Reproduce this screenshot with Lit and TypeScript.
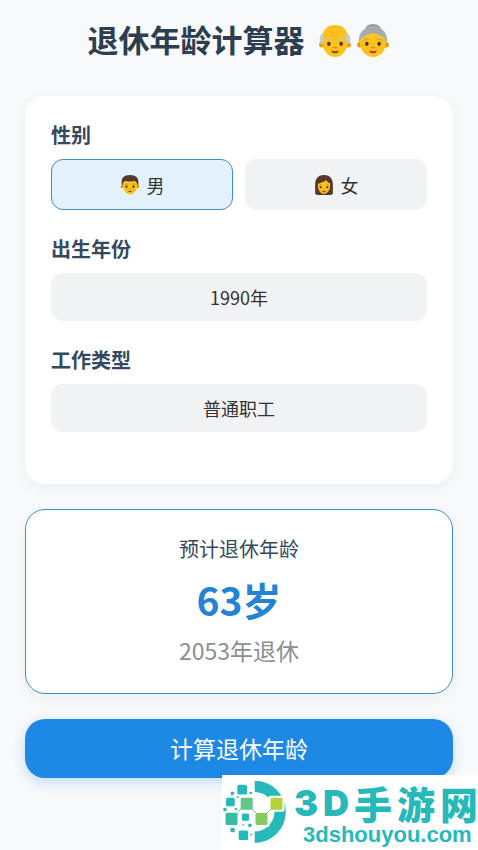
import { LitElement, html, css, svg } from "lit";
import { customElement, state } from "lit/decorators.js";

const grandpa = svg`
  <circle cx="4" cy="22" r="2.800" fill="#e59a00"/>
  <circle cx="32" cy="22" r="2.800" fill="#e59a00"/>
  <path d="M18 1C8.500 1 4 7.500 4 17c0 10.500 6.500 18 14 18s14-7.500 14-18C32 7.500 27.500 1 18 1z" fill="#fcc21b"/>
  <path d="M6 9c-4 2-5.500 8-3 12.500 2.500-1 3.500-4 3.500-7zM30 9c4 2 5.500 8 3 12.500-2.500-1-3.500-4-3.500-7z" fill="#c9cbc4"/>
  <path d="M8.500 17.500c1-2 4-2.500 6-1.200M27.500 17.500c-1-2-4-2.500-6-1.200" fill="none" stroke="#cfc39a" stroke-width="1.600" stroke-linecap="round"/>
  <path d="M13 9.500h10M14 12.500h8" stroke="#eeb010" stroke-width=".8"/>
  <ellipse cx="11.500" cy="21" rx="1.900" ry="2.200" fill="#4a3428"/>
  <ellipse cx="24.500" cy="21" rx="1.900" ry="2.200" fill="#4a3428"/>
  <path d="M16.300 25h3.400" stroke="#d98c00" stroke-width="1.400" stroke-linecap="round"/>
  <path d="M13.500 28q4.500 1.500 9 0-1.500 3-4.500 3t-4.500-3z" fill="#8a3f1c"/>`;

const grandma = svg`
  <ellipse cx="18" cy="4.500" rx="8" ry="4.500" fill="#9fa3a6"/>
  <path d="M18 3C8 3 3 9 3 18l2 4h26l2-4C33 9 28 3 18 3z" fill="#acb0b3"/>
  <circle cx="4" cy="22" r="2.800" fill="#e59a00"/>
  <circle cx="32" cy="22" r="2.800" fill="#e59a00"/>
  <path d="M18 9.500C13 11 6 13 4 18c0 10 6.500 17 14 17s14-7 14-17c-2-5-9-7-14-8.500z" fill="#fcc21b"/>
  <path d="M8 8.500q10-6 20 0M7 11.500q11-6.500 22 0" fill="none" stroke="#93979a" stroke-width=".7"/>
  <path d="M8.500 17.500c1-1.500 3.500-2 5-1M27.500 17.500c-1-1.500-3.500-2-5-1" fill="none" stroke="#c4a75a" stroke-width="1.400" stroke-linecap="round"/>
  <ellipse cx="11.500" cy="21" rx="1.900" ry="2.200" fill="#4a3428"/>
  <ellipse cx="24.500" cy="21" rx="1.900" ry="2.200" fill="#4a3428"/>
  <path d="M16.300 25h3.400" stroke="#d98c00" stroke-width="1.400" stroke-linecap="round"/>
  <path d="M13.500 28q4.500 1.500 9 0-1.500 3-4.500 3t-4.500-3z" fill="#a8392a"/>`;

const man = svg`
  <circle cx="4" cy="21" r="3" fill="#e59a00"/>
  <circle cx="32" cy="21" r="3" fill="#e59a00"/>
  <path d="M18 3C9 3 5 8 5 17c0 10 6 18 13 18s13-8 13-18C31 8 27 3 18 3z" fill="#fcc21b"/>
  <path d="M18 0C7 0 3 6 3 12v5l2 2c0-4 1-6 4-8 6 1 12 1 18 0 3 2 4 4 4 8l2-2v-5C33 6 29 0 18 0z" fill="#543930"/>
  <path d="M8.500 17q3-2 6 0M27.500 17q-3-2-6 0" fill="none" stroke="#a5782c" stroke-width="1.200"/>
  <circle cx="11.700" cy="21" r="1.900" fill="#3c2b24"/>
  <circle cx="24.300" cy="21" r="1.900" fill="#3c2b24"/>
  <path d="M16 25h4" stroke="#d98c00" stroke-width="1.500"/>
  <path d="M14 28.500q4 1.500 8 0-1 2.500-4 2.500t-4-2.500z" fill="#7a3b1c"/>`;

const woman = svg`
  <path d="M18 0C6 0 2 8 2 18v14q0 4 5 4h22q5 0 5-4V18C34 8 30 0 18 0z" fill="#543930"/>
  <path d="M22 9c-4 4-10 5-15 7v3c0 9 5 15 11 15s11-6 11-15v-4c-3-1-6-3-7-6z" fill="#fcc21b"/>
  <path d="M9 18.500q2.500-2 5 0M27 18.500q-2.500-2-5 0" fill="none" stroke="#a5782c" stroke-width="1.200"/>
  <circle cx="12" cy="22" r="1.900" fill="#3c2b24"/>
  <circle cx="24" cy="22" r="1.900" fill="#3c2b24"/>
  <path d="M16.500 25.500h3" stroke="#d98c00" stroke-width="1.400"/>
  <path d="M14 28.500q4 1 8 0-1 3-4 3t-4-3z" fill="#b3382a"/>`;

const face = (art: unknown, cls: string) =>
  html`<svg class=${cls} viewBox="0 0 36 36" aria-hidden="true">${art}</svg>`;

@customElement("site-badge")
export class SiteBadge extends LitElement {
  static styles = css`
    :host {
      display: flex;
      box-sizing: border-box;
      width: 256px;
      height: 75px;
      background: #fff;
      color: #27b9b9;
    }
    .mark {
      flex: none;
      width: 68px;
      height: 75px;
    }
    .words {
      flex: 1;
      display: flex;
      flex-direction: column;
      padding: 8px 0 0 4px;
    }
    .name {
      display: flex;
      justify-content: space-between;
      font: 900 38px/40px "Noto Sans CJK SC", sans-serif;
    }
    .latin {
      font-family: Inter, "Liberation Sans", sans-serif;
      font-size: 36px;
    }
    .domain {
      font: bold 22px/24px "Liberation Sans", sans-serif;
      padding-left: 9px;
      color: #27b9b9;
      text-decoration: none;
    }
  `;

  render() {
    return html`
      <svg class="mark" viewBox="0 0 68 75" aria-hidden="true">
        <path d="M32.700 5.700a31 31 0 0 1 0 62.200V56.500a19.600 19.600 0 0 0 0-39.500z" fill="#27b9b9"/>
        <g fill="#fff">
          <rect x="31.500" y="36" width="16" height="16" rx="2"/>
          <rect x="46.500" y="20.700" width="16" height="16" rx="2"/>
        </g>
        <path d="M14 39l6-6M29 33l6 6M44 39l6-6" stroke="#6dc88a" stroke-width="1"/>
        <g fill="#27b9b9">
          <rect x="15.300" y="9.700" width="9.700" height="9.700" rx="1.500"/>
          <rect x="4" y="22.700" width="8.700" height="8.500" rx="1.500"/>
          <rect x="20" y="38.500" width="7" height="7.200" rx="1.200"/>
          <rect x="16.700" y="55.500" width="9.500" height="9.500" rx="1.500"/>
          <rect x="8.700" y="16.700" width="3.300" height="3.300" rx=".8"/>
          <rect x="27.700" y="16.700" width="2.300" height="2.300" rx=".6"/>
          <rect x="14.700" y="21.300" width="1.800" height="1.800" rx=".5"/>
          <rect x="1.300" y="33" width="3.300" height="3.300" rx=".8"/>
          <rect x="12.700" y="33" width="2.200" height="2.200" rx=".6"/>
          <rect x="8.500" y="53" width="4.200" height="4.200" rx=".8"/>
          <rect x="26.300" y="48.700" width="3.300" height="3.300" rx=".8"/>
          <rect x="20.500" y="49" width="1.600" height="1.600" rx=".5"/>
          <rect x="28.300" y="58.700" width="1.800" height="1.800" rx=".5"/>
        </g>
        <rect x="3.500" y="37.800" width="12" height="12.300" rx="1.500" fill="#36bda6"/>
        <rect x="18.700" y="22.700" width="12" height="12" rx="1.500" fill="#5dc88a"/>
        <rect x="33.500" y="38" width="12" height="12" rx="1.500" fill="#86cc5c"/>
        <rect x="48.500" y="22.700" width="12" height="12" rx="1.500" fill="#b5d334"/>
      </svg>
      <div class="words">
        <div class="name">
          <span class="latin">3</span><span class="latin">D</span><span>手</span><span>游</span><span>网</span>
        </div>
        <a class="domain" href="#">3dshouyou.com</a>
      </div>
    `;
  }
}

@customElement("app-root")
export class AppRoot extends LitElement {
  static styles = css`
    :host {
      display: block;
      position: relative;
      box-sizing: border-box;
      min-height: 100vh;
      padding: 14px 25px 72px;
      background: #f7f9fb;
      color: #333;
      font-family: "Noto Sans CJK SC", sans-serif;
    }
    * {
      box-sizing: border-box;
    }
    .title {
      display: flex;
      align-items: center;
      justify-content: center;
      gap: 12px;
      margin: 0 0 32px;
      color: #2c3e50;
      font-size: 31px;
      line-height: 50px;
      font-weight: 700;
    }
    .faces {
      display: flex;
      gap: 2px;
      padding-top: 3px;
    }
    .large {
      width: 36px;
      height: 34px;
    }
    .small {
      width: 20px;
      height: 20px;
    }
    .form {
      display: flex;
      flex-direction: column;
      gap: 25px;
    }
    .card {
      display: flex;
      flex-direction: column;
      gap: 25px;
      padding: 25px 26px 52px;
      border-radius: 20px;
      background: #fff;
      box-shadow: 0 4px 14px rgba(44, 62, 80, 0.05);
    }
    .field {
      display: flex;
      flex-direction: column;
      gap: 10px;
      min-width: 0;
    }
    .label {
      color: #34495e;
      font-size: 20px;
      line-height: 28px;
      font-weight: 700;
    }
    .choices {
      display: grid;
      grid-template-columns: 1fr 1fr;
      gap: 12px;
    }
    .choice {
      position: relative;
      display: flex;
      align-items: center;
      justify-content: center;
      gap: 7px;
      height: 51px;
      border: 1px solid transparent;
      border-radius: 12px;
      background: #f1f2f4;
      font-size: 18px;
      line-height: 28px;
      cursor: pointer;
    }
    .choice:has(.radio:checked) {
      border-color: #3c90c4;
      background: #e3f1fc;
    }
    .radio {
      position: absolute;
      inset: 0;
      width: 100%;
      height: 100%;
      margin: 0;
      opacity: 0;
      cursor: pointer;
    }
    .picker {
      appearance: none;
      width: 100%;
      height: 48px;
      padding: 0;
      border: 0;
      border-radius: 12px;
      background: #f1f2f4;
      color: #333;
      font: 18px/28px "Noto Sans CJK SC", sans-serif;
      text-align: center;
      text-align-last: center;
    }
    .result {
      display: flex;
      flex-direction: column;
      align-items: center;
      gap: 8px;
      padding: 25px 25px 28px;
      border: 1px solid #3c90c4;
      border-radius: 20px;
      background: #fff;
      box-shadow: 0 4px 14px rgba(44, 62, 80, 0.05);
    }
    .caption {
      color: #34495e;
      font-size: 20px;
      line-height: 28px;
    }
    .age {
      color: #2583d6;
      font-size: 39px;
      line-height: 56px;
      font-weight: 700;
    }
    .year {
      color: #8a8f92;
      font-size: 23px;
      line-height: 30px;
    }
    .submit {
      height: 59px;
      padding: 0 0 2px;
      border: 0;
      border-radius: 20px;
      background: #1e88e5;
      box-shadow: 0 4px 12px rgba(30, 136, 229, 0.25);
      color: #fff;
      font: 23px/30px "Noto Sans CJK SC", sans-serif;
      cursor: pointer;
    }
    .badge {
      position: absolute;
      right: 0;
      bottom: 0;
    }
  `;

  @state() private gender = "男";
  @state() private age = 63;

  private calculate(e: Event) {
    e.preventDefault();
    this.age = this.gender === "男" ? 63 : 58;
  }

  private choice(value: string, art: unknown) {
    return html`
      <label class="choice">
        <input class="radio" type="radio" name="gender" .value=${value}
          ?checked=${this.gender === value}
          @change=${() => (this.gender = value)} />
        ${face(art, "small")}<span>${value}</span>
      </label>`;
  }

  render() {
    return html`
      <h1 class="title">
        <span>退休年龄计算器</span>
        <span class="faces">${face(grandpa, "large")}${face(grandma, "large")}</span>
      </h1>
      <form class="form" @submit=${this.calculate}>
        <section class="card">
          <div class="field" role="radiogroup" aria-labelledby="gender">
            <span class="label" id="gender">性别</span>
            <div class="choices">${this.choice("男", man)}${this.choice("女", woman)}</div>
          </div>
          <div class="field">
            <label class="label" for="birth">出生年份</label>
            <select class="picker" id="birth"><option>1990年</option></select>
          </div>
          <div class="field">
            <label class="label" for="job">工作类型</label>
            <select class="picker" id="job"><option>普通职工</option></select>
          </div>
        </section>
        <section class="result">
          <span class="caption">预计退休年龄</span>
          <strong class="age">${this.age}岁</strong>
          <span class="year">${1990 + this.age}年退休</span>
        </section>
        <button class="submit" type="submit">计算退休年龄</button>
      </form>
      <site-badge class="badge"></site-badge>
    `;
  }
}
